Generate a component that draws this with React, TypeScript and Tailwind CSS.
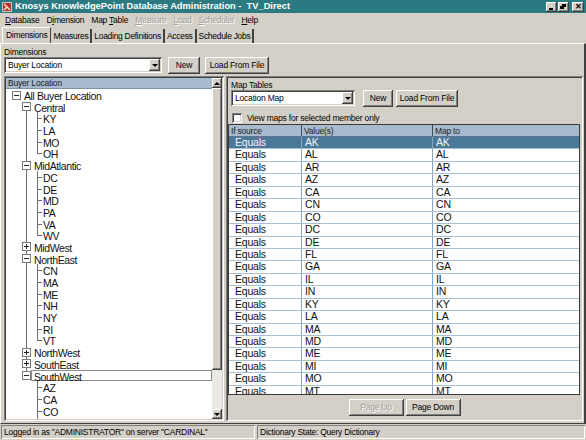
import React from "react";

const raised =
  "shadow-[inset_-1px_-1px_#404040,inset_1px_1px_#ffffff,inset_-2px_-2px_#808080,inset_2px_2px_#d4d0c8]";
const sunken =
  "shadow-[inset_1px_1px_#808080,inset_-1px_-1px_#ffffff,inset_2px_2px_#404040,inset_-2px_-2px_#d4d0c8]";
const thinSunken = "shadow-[inset_1px_1px_#808080,inset_-1px_-1px_#ffffff]";

type TreeRow = {
  label: string;
  lvl: 0 | 1 | 2;
  box?: "-" | "+";
  first?: boolean;
  last?: boolean;
  cont?: boolean;
  focus?: boolean;
};

function leaves(codes: string[], cont: boolean): TreeRow[] {
  return codes.map((c, i) => ({ label: c, lvl: 2, last: i === codes.length - 1, cont }));
}

const TREE: TreeRow[] = [
  { label: "All Buyer Location", lvl: 0, box: "-" },
  { label: "Central", lvl: 1, box: "-", first: true },
  ...leaves(["KY", "LA", "MO", "OH"], true),
  { label: "MidAtlantic", lvl: 1, box: "-" },
  ...leaves(["DC", "DE", "MD", "PA", "VA", "WV"], true),
  { label: "MidWest", lvl: 1, box: "+" },
  { label: "NorthEast", lvl: 1, box: "-" },
  ...leaves(["CN", "MA", "ME", "NH", "NY", "RI", "VT"], true),
  { label: "NorthWest", lvl: 1, box: "+" },
  { label: "SouthEast", lvl: 1, box: "+" },
  { label: "SouthWest", lvl: 1, box: "-", last: true, focus: true },
  ...leaves(["AZ", "CA", "CO", "NM"], false).map((r) => ({ ...r, last: false })),
];

const CODES = [
  "AK", "AL", "AR", "AZ", "CA", "CN", "CO", "DC", "DE", "FL", "GA",
  "IL", "IN", "KY", "LA", "MA", "MD", "ME", "MI", "MO", "MT",
];

function ExpandBox({ sign, left }: { sign: "-" | "+"; left: string }) {
  return (
    <div className={`absolute top-[1.5px] ${left} w-[9px] h-[9px] border border-[#7a7a7a] bg-white`}>
      <div className="absolute left-[1px] top-[3px] w-[5px] h-[1px] bg-[#222]" />
      {sign === "+" && <div className="absolute left-[3px] top-[1px] w-[1px] h-[5px] bg-[#222]" />}
    </div>
  );
}

function TreeItem({ row }: { row: TreeRow }) {
  const pad = row.lvl === 0 ? "pl-[18px]" : row.lvl === 1 ? "pl-[28px]" : "pl-[37px]";
  return (
    <div className={`relative h-[11.7px] leading-[11.7px] ${pad}`}>
      {/* region connector */}
      {row.lvl === 1 && !row.first && (
        <div className={`absolute left-[20px] top-0 w-[1px] bg-[#6e6e6e] ${row.last ? "h-[6px]" : "h-full"}`} />
      )}
      {row.lvl === 1 && row.first && (
        <div className="absolute left-[20px] top-[6px] w-[1px] h-[6px] bg-[#6e6e6e]" />
      )}
      {row.lvl === 2 && row.cont && (
        <div className="absolute left-[20px] top-0 w-[1px] h-full bg-[#6e6e6e]" />
      )}
      {row.lvl === 2 && (
        <>
          <div className={`absolute left-[31px] top-0 w-[1px] bg-[#6e6e6e] ${row.last ? "h-[6px]" : "h-full"}`} />
          <div className="absolute left-[31px] top-[6px] w-[5px] h-[1px] bg-[#6e6e6e]" />
        </>
      )}
      {row.box && <ExpandBox sign={row.box} left={row.lvl === 0 ? "left-[6px]" : "left-[16px]"} />}
      {row.focus && (
        <div className="absolute left-[25px] right-0 top-0 h-full border border-[#8c8c8c]" />
      )}
      <span className="relative text-[10.5px] tracking-[-0.4px] text-[#111]">{row.label}</span>
    </div>
  );
}

function Combo({ value, width }: { value: string; width: string }) {
  return (
    <div className={`${width} h-[16px] bg-white ${sunken} flex items-center pl-[4px] pr-[2px]`}>
      <span className="flex-1 text-[8.5px] tracking-[-0.2px] text-black">{value}</span>
      <div className={`w-[11px] h-[12px] bg-[#d4d0c8] ${raised} flex items-center justify-center`}>
        <div className="w-0 h-0 border-l-[3px] border-r-[3px] border-t-[3px] border-l-transparent border-r-transparent border-t-black" />
      </div>
    </div>
  );
}

function Button({ label, width, disabled }: { label: string; width: string; disabled?: boolean }) {
  return (
    <div
      className={`${width} h-[17px] bg-[#d4d0c8] ${raised} flex items-center justify-center text-[8.5px] tracking-[-0.2px] ${
        disabled ? "text-[#a09d96] [text-shadow:1px_1px_0_#ffffff]" : "text-black"
      }`}
    >
      {label}
    </div>
  );
}

function MenuItem({ label, u, disabled }: { label: string; u: number; disabled?: boolean }) {
  return (
    <span className={disabled ? "text-[#a19e97] [text-shadow:1px_1px_0_#ffffff]" : "text-black"}>
      {label.slice(0, u)}
      <span className="underline">{label[u]}</span>
      {label.slice(u + 1)}
    </span>
  );
}

export default function App() {
  return (
    <div className="w-[586px] h-[440px] bg-[#d4d0c8] flex flex-col overflow-hidden font-['Liberation_Sans',Arial,sans-serif] select-none">
      {/* Title bar */}
      <div className="h-[13px] bg-[#2b7a82] flex items-center pl-[2px] pr-[2px]">
        <svg width="10" height="10" viewBox="0 0 10 10" className="mr-[3px]">
          <rect x="0" y="0" width="10" height="10" fill="#c9c6bd" />
          <rect x="1" y="1" width="8" height="8" fill="#b8322c" />
          <path d="M2 2 L8 8 M2 8 L5 5" stroke="#f4e8e0" strokeWidth="1.4" />
        </svg>
        <span className="text-white font-bold text-[9.3px] tracking-[0px] whitespace-pre flex-1">
          Knosys KnowledgePoint Database Administration -  TV_Direct
        </span>
        <div className="flex gap-[1px] mt-[1px]">
          <div className={`w-[11px] h-[10px] bg-[#d4d0c8] ${raised} relative`}>
            <div className="absolute left-[3px] bottom-[2px] w-[4px] h-[2px] bg-black" />
          </div>
          <div className={`w-[11px] h-[10px] bg-[#d4d0c8] ${raised} relative mr-[2px]`}>
            <div className="absolute left-[4px] top-[2px] w-[4px] h-[3px] border border-black border-t-2" />
            <div className="absolute left-[2px] top-[4px] w-[4px] h-[3px] border border-black border-t-2 bg-[#d4d0c8]" />
          </div>
          <div className={`w-[12px] h-[10px] bg-[#d4d0c8] ${raised} flex items-center justify-center text-[8px] font-bold leading-none text-black`}>
            ✕
          </div>
        </div>
      </div>

      {/* Menu bar */}
      <div className="h-[14px] flex items-center gap-[7px] pl-[5px] text-[8.5px] tracking-[-0.25px]">
        <MenuItem label="Database" u={0} />
        <MenuItem label="Dimension" u={1} />
        <MenuItem label="Map Table" u={4} />
        <MenuItem label="Measure" u={0} disabled />
        <MenuItem label="Load" u={0} disabled />
        <MenuItem label="Scheduler" u={0} disabled />
        <MenuItem label="Help" u={0} />
      </div>

      {/* Tabs */}
      <div className="h-[16px] flex items-end pl-[2px] text-[8.5px] tracking-[-0.3px] text-black">
        <div className="h-[16px] px-[3px] flex items-center border-t border-l border-white border-r border-r-[#404040] bg-[#d4d0c8]">
          Dimensions
        </div>
        <div className="h-[14px] px-[2px] flex items-center border-r-2 border-r-[#404040]">Measures</div>
        <div className="h-[14px] px-[2px] flex items-center border-r-2 border-r-[#404040]">Loading Definitions</div>
        <div className="h-[14px] px-[2px] flex items-center border-r-2 border-r-[#404040]">Access</div>
        <div className="h-[14px] px-[2px] flex items-center border-r-2 border-r-[#404040]">Schedule Jobs</div>
      </div>

      {/* Tab page */}
      <div className="h-[381px] border-t border-l border-white border-r-2 border-r-[#404040] border-b border-b-[#404040] flex flex-col pl-[3px] pr-[1px]">
        <div className="h-[13px] pt-[3px] text-[8.5px] tracking-[-0.2px] leading-[10px] text-black">Dimensions</div>
        <div className="h-[16px] flex items-center">
          <Combo value="Buyer Location" width="w-[158px]" />
          <div className="ml-[6px]">
            <Button label="New" width="w-[32px]" />
          </div>
          <div className="ml-[5px]">
            <Button label="Load From File" width="w-[64px]" />
          </div>
        </div>

        {/* Body */}
        <div className="mt-[3px] h-[345px] flex gap-[2px]">
          {/* Tree */}
          <div className={`w-[220px] h-full bg-white ${sunken} p-[2px] flex`}>
            <div className="flex-1 flex flex-col overflow-hidden">
              <div className="h-[11px] bg-[#a8bacd] border-b border-[#7d91a6] text-[8.5px] tracking-[-0.2px] leading-[11px] pl-[2px] text-[#1a1a1a]">
                Buyer Location
              </div>
              <div className="flex-1 overflow-hidden">
                {TREE.map((r, i) => (
                  <TreeItem key={i} row={r} />
                ))}
              </div>
            </div>
            {/* scrollbar */}
            <div className="w-[10px] h-full flex flex-col bg-[#ebe9e4]">
              <div className={`h-[10px] bg-[#d4d0c8] ${raised} flex items-center justify-center`}>
                <div className="w-0 h-0 border-l-[3px] border-r-[3px] border-b-[3px] border-l-transparent border-r-transparent border-b-black" />
              </div>
              <div className={`h-[282px] bg-[#d4d0c8] ${raised}`} />
              <div className="flex-1" />
              <div className={`h-[10px] bg-[#d4d0c8] ${raised} flex items-center justify-center`}>
                <div className="w-0 h-0 border-l-[3px] border-r-[3px] border-t-[3px] border-l-transparent border-r-transparent border-t-black" />
              </div>
            </div>
          </div>

          {/* Map panel */}
          <div className={`flex-1 h-full ${sunken} p-[2px] flex flex-col`}>
            <div className="pl-[3px] mt-[2px] h-[10px] text-[8.5px] tracking-[-0.2px] leading-[10px] text-black">Map Tables</div>
            <div className="pl-[3px] h-[16px] flex items-center">
              <Combo value="Location Map" width="w-[124px]" />
              <div className="ml-[8px]">
                <Button label="New" width="w-[30px]" />
              </div>
              <div className="ml-[3px]">
                <Button label="Load From File" width="w-[62px]" />
              </div>
            </div>
            <div className="h-[18px] pl-[4px] flex items-end pb-[1px] gap-[5px]">
              <div className={`w-[10px] h-[10px] bg-white ${sunken}`} />
              <span className="text-[8.5px] tracking-[-0.2px] leading-[10px] text-black">
                View maps for selected member only
              </span>
            </div>

            {/* Grid */}
            <div className="h-[271px] mr-[1px] bg-white border border-[#3a3a3a] overflow-hidden flex flex-col">
              <div className="h-[12px] shrink-0 flex bg-[#a8bacd] border-b border-[#5c7691] text-[8.5px] tracking-[-0.2px] leading-[12px] text-[#222]">
                <div className="w-[73px] pl-[2px] border-r border-[#3d4f61]">If source</div>
                <div className="w-[131px] pl-[2px] border-r border-[#3d4f61]">Value(s)</div>
                <div className="flex-1 pl-[2px]">Map to</div>
              </div>
              {CODES.map((c, i) => {
                const sel = i === 0;
                return (
                  <div
                    key={c}
                    className={`h-[12.45px] shrink-0 flex border-b border-[#a9c0d5] text-[10.5px] tracking-[-0.2px] leading-[11.5px] ${
                      sel ? "bg-[#4a7898] text-[#eef3f7]" : "text-[#111]"
                    }`}
                  >
                    <div className="w-[73px] pl-[6px] border-r border-[#8aa5bf]">Equals</div>
                    <div className="w-[131px] pl-[3px] border-r border-[#8aa5bf]">{c}</div>
                    <div className="flex-1 pl-[3px]">{c}</div>
                  </div>
                );
              })}
            </div>

            <div className="flex-1 flex items-center justify-center gap-[2px]">
              <Button label="Page Up" width="w-[55px]" disabled />
              <Button label="Page Down" width="w-[55px]" />
            </div>
          </div>
        </div>
      </div>

      {/* Status bar */}
      <div className="mt-[1px] h-[15px] flex gap-[2px] px-[1px] pb-[1px] text-[8.5px] tracking-[-0.25px] leading-[10px] text-black">
        <div className={`w-[254px] h-[14px] ${thinSunken} pl-[3px] flex items-center`}>
          Logged in as "ADMINISTRATOR" on server "CARDINAL"
        </div>
        <div className={`flex-1 h-[14px] ${thinSunken} pl-[3px] flex items-center`}>
          Dictionary State: Query Dictionary
        </div>
      </div>
    </div>
  );
}
